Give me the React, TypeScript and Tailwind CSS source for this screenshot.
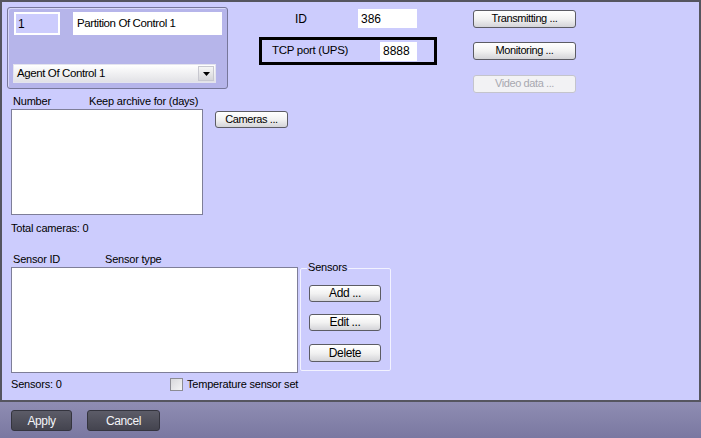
import React from 'react';

const font = { fontFamily: '"Liberation Sans", Arial, sans-serif' };

function XpButton({ label, className = '', disabled = false }: { label: string; className?: string; disabled?: boolean }) {
  return (
    <div
      className={`flex items-center justify-center rounded-[3px] border pb-[1px] text-[11px] leading-none tracking-[-0.4px] ${
        disabled
          ? 'border-[#c4c4cc] bg-[#f2f2f4] text-[#a8a8b0]'
          : 'border-[#5c5c64] bg-gradient-to-b from-white via-[#f2f2f2] to-[#d4d4d8] text-black'
      } ${className}`}
    >
      {label}
    </div>
  );
}

function DarkButton({ label, className = '' }: { label: string; className?: string }) {
  return (
    <div
      className={`flex items-center justify-center rounded-[3px] border border-[#34343e] bg-gradient-to-b from-[#5c5c68] to-[#44444f] text-[12px] tracking-[-0.4px] text-[#f4f4f8] ${className}`}
    >
      {label}
    </div>
  );
}

export default function App() {
  return (
    <div className="flex h-[438px] w-[701px] flex-col overflow-hidden text-[11px] tracking-[-0.2px] text-black" style={font}>
      <div className="flex h-[402px] flex-col border-2 border-[#55555f] bg-[#ccccfd]">
        {/* top row */}
        <div className="flex h-[86px] items-start pl-[5px] pt-[5px]">
          <div className="h-[82px] w-[221px] rounded-[3px] border border-[#77779a] bg-[#b6b5ea] pl-[5px] pt-[4px] shadow-[inset_1px_1px_0_#d8d8f8]">
            <div className="flex gap-[13px]">
              <div className="ml-[1px] flex h-[23px] w-[46px] items-center border-2 border-white bg-[#ccccfd] pl-[2px] text-[12px]">1</div>
              <div className="flex h-[23px] w-[149px] items-center bg-white pl-[4px] text-[11.5px] tracking-[-0.4px]">
                Partition Of Control 1
              </div>
            </div>
            <div className="mt-[29px] flex h-[19px] w-[203px] items-center border border-[#e4e4ee] bg-gradient-to-b from-white to-[#e2e2e6] pl-[3px] pr-[1px]">
              <span className="flex-1 text-[11.5px] tracking-[-0.4px]">Agent Of Control 1</span>
              <div className="flex h-[15px] w-[16px] items-center justify-center border border-[#c8c8d0] bg-gradient-to-b from-[#f6f6f6] to-[#d6d6da]">
                <svg width="7" height="4" viewBox="0 0 7 4">
                  <path d="M0 0h7L3.5 4z" fill="#000" />
                </svg>
              </div>
            </div>
          </div>

          <div className="ml-[31px] flex w-[178px] flex-col">
            <div className="mt-[2px] flex h-[19px] items-center">
              <span className="ml-[36px] w-[63px] text-[12px]">ID</span>
              <div className="flex h-[19px] w-[59px] items-center bg-white pl-[3px] text-[12px] tracking-normal">386</div>
            </div>
            <div className="mt-[9px] flex h-[28px] w-[178px] items-center border-[3px] border-black">
              <span className="pl-[10px] text-[11.5px] tracking-[-0.3px]">TCP port (UPS)</span>
              <div className="ml-auto mr-[17px] flex h-[19px] w-[37px] items-center bg-white pl-[3px] text-[12px] tracking-normal">8888</div>
            </div>
          </div>

          <div className="ml-[36px] mt-[3px] flex flex-col">
            <XpButton label="Transmitting ..." className="h-[18px] w-[103px]" />
            <XpButton label="Monitoring ..." className="mt-[14px] h-[18px] w-[103px]" />
            <XpButton label="Video data ..." disabled className="mt-[15px] h-[18px] w-[103px]" />
          </div>
        </div>

        {/* cameras */}
        <div className="ml-[9px] mt-[7px] flex flex-col">
          <div className="flex h-[13px] items-center">
            <span className="w-[78px] pl-[2px]">Number</span>
            <span>Keep archive for (days)</span>
          </div>
          <div className="mt-[1px] flex items-start">
            <div className="h-[106px] w-[192px] border border-[#7e7e98] bg-white" />
            <XpButton label="Cameras ..." className="ml-[12px] mt-[2px] h-[17px] w-[73px]" />
          </div>
          <div className="mt-[7px] flex h-[13px] items-center">Total cameras: 0</div>

          {/* sensors */}
          <div className="mt-[18px] flex h-[13px] items-center">
            <span className="w-[94px] pl-[2px]">Sensor ID</span>
            <span>Sensor type</span>
          </div>
          <div className="mt-[1px] flex items-start">
            <div className="h-[106px] w-[287px] border border-[#7e7e98] bg-white" />
            <div className="relative ml-[2px] mt-[1px] flex h-[103px] w-[91px] flex-col rounded-[2px] border border-[#f2f2ff] pl-[8px] pt-[16px]">
              <span className="absolute left-[6px] top-[-8px] bg-[#ccccfd] px-[1px] text-[11px] leading-[13px]">Sensors</span>
              <XpButton label="Add ..." className="h-[17px] w-[72px] text-[12px]" />
              <XpButton label="Edit ..." className="mt-[12px] h-[17px] w-[72px] text-[12px]" />
              <XpButton label="Delete" className="mt-[13px] h-[18px] w-[72px] text-[12px]" />
            </div>
          </div>
          <div className="mt-[5px] flex h-[13px] items-center">
            <span className="w-[159px]">Sensors: 0</span>
            <div className="h-[13px] w-[13px] border border-[#8c8c94] bg-gradient-to-br from-[#d8d8dc] to-[#f4f4f6]" />
            <span className="ml-[4px]">Temperature sensor set</span>
          </div>
        </div>
      </div>

      <div className="flex flex-1 items-start bg-gradient-to-b from-[#8f8db3] to-[#7a78a1] pl-[11px] pt-[8px]">
        <DarkButton label="Apply" className="h-[21px] w-[61px]" />
        <DarkButton label="Cancel" className="ml-[15px] h-[21px] w-[73px]" />
      </div>
    </div>
  );
}
